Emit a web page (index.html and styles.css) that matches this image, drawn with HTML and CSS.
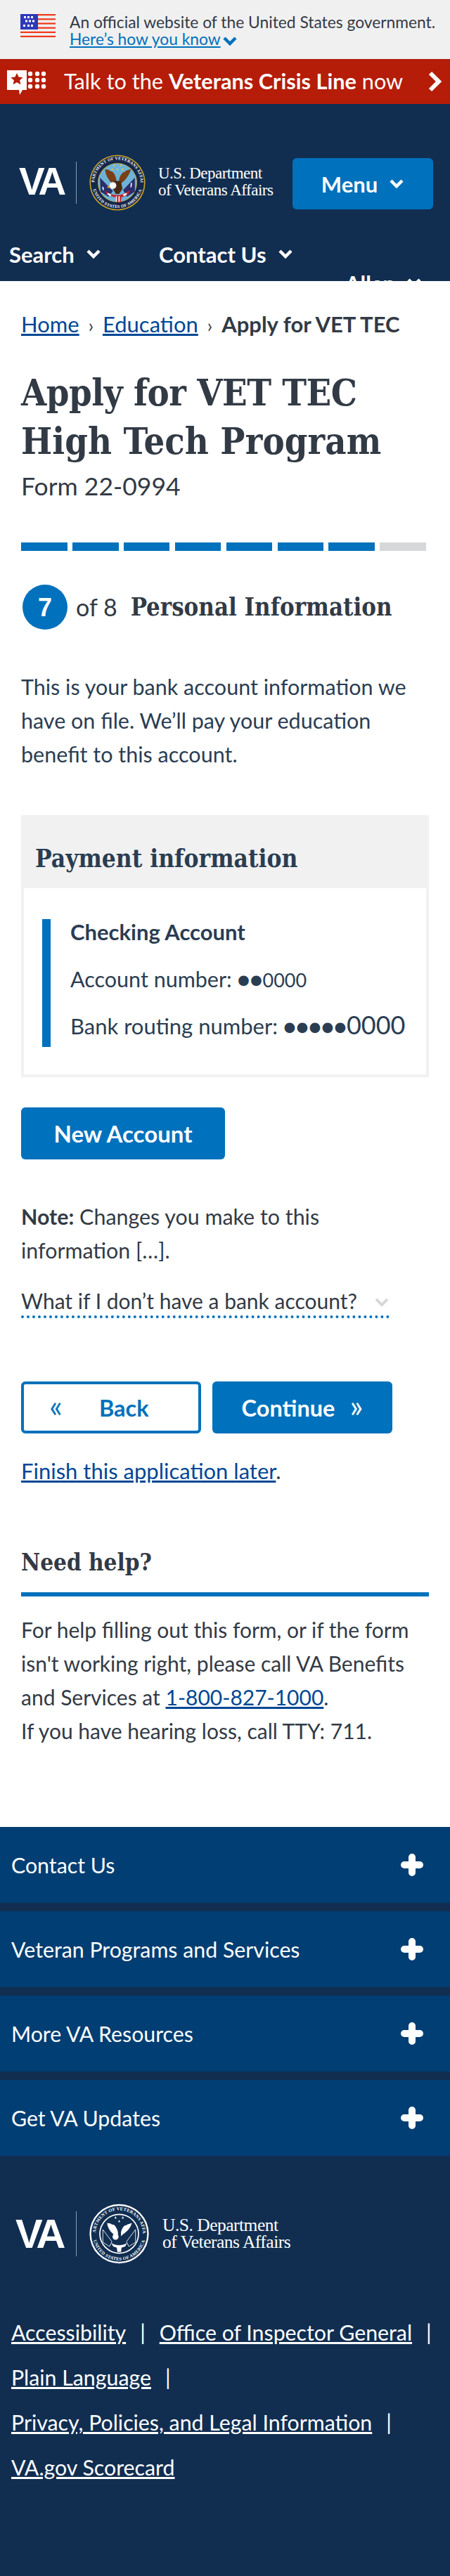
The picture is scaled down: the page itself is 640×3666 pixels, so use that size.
FILE: index.html
```html
<!DOCTYPE html>
<html lang="en">
	<head>
		<meta charset="utf-8">
		<title>Apply for VET TEC High Tech Program</title>
		<link rel="stylesheet" href="styles.css">
	</head>
	<body>
		<div class="govBanner">
			<svg class="flag" viewBox="0 0 50 33">
				<rect y="0" width="50" height="2.2" fill="#f1371a"/>
				<rect y="6.2" width="50" height="2.2" fill="#f1371a"/>
				<rect y="12.4" width="50" height="2.2" fill="#f1371a"/>
				<rect y="18.6" width="50" height="2.2" fill="#f1371a"/>
				<rect y="24.8" width="50" height="2.2" fill="#f1371a"/>
				<rect y="30.8" width="50" height="2.2" fill="#f1371a"/>
				<rect width="25" height="22" fill="#2e39b8"/>
				<path fill="#fff" d="M5 3h3v3H5zM10 3h3v3h-3zM15 3h3v3h-3zM7 8.5h3v3H7zM12 8.5h3v3h-3zM17 8.5h3v3h-3zM4 15h3v3H4zM10 15h3v3h-3zM15 15h3v3h-3z"/>
			</svg>
			<div class="govText">
				An official website of the United States government.<br>
				<a href="#">Here’s how you know</a><svg class="govChevron" viewBox="0 0 22 16"><path d="M3 3l8 8 8-8"/></svg>
			</div>
		</div>

		<a class="crisisBar" href="#">
			<svg class="crisisIcon" viewBox="0 0 56 35">
				<path fill="#fff" d="M0 0h28v28h-6l-4 7-1-7H0z"/>
				<path fill="#b51d08" d="M14 4l2.600 5.600 6 .6-4.500 4 1.300 6L14 17.200 8.600 20.200l1.300-6-4.500-4 6-.6z"/>
				<g fill="#fff">
					<circle cx="33" cy="5" r="3.200"/><circle cx="43" cy="5" r="3.200"/><circle cx="52" cy="5" r="3.200"/>
					<circle cx="33" cy="14" r="3.200"/><circle cx="43" cy="14" r="3.200"/><circle cx="52" cy="14" r="3.200"/>
					<circle cx="33" cy="23" r="3.200"/><circle cx="43" cy="23" r="3.200"/><circle cx="52" cy="23" r="3.200"/>
				</g>
			</svg>
			<span class="crisisText">Talk to the <strong>Veterans Crisis Line</strong> now</span>
			<svg class="crisisArrow" viewBox="0 0 20 30"><path d="M4 3l12 12L4 27"/></svg>
		</a>

		<header class="siteHeader">
			<div class="logoRow">
				<div class="vaLogo">
					<span class="vaMark">VA</span>
					<span class="vaRule"></span>
					<svg class="seal" viewBox="0 0 100 100">
						<defs>
							<path id="sealTop" d="M9 50a41 41 0 0 1 82 0"/>
							<path id="sealBottom" d="M5 50a45 45 0 0 0 90 0"/>
						</defs>
						<circle cx="50" cy="50" r="49.500" fill="#c9a227"/>
						<circle cx="50" cy="50" r="47.500" fill="#14284b"/>
						<circle cx="50" cy="50" r="35" fill="#c9a227"/>
						<circle cx="50" cy="50" r="34" fill="#6db3d8"/>
						<text class="sealText"><textPath href="#sealTop" startOffset="50%" text-anchor="middle">DEPARTMENT OF VETERANS AFFAIRS</textPath></text>
						<text class="sealText"><textPath href="#sealBottom" startOffset="50%" text-anchor="middle">UNITED STATES OF AMERICA</textPath></text>
						<path fill="#f2c733" d="M44 17l1.800 3.600-3.600 0zM56 17l1.800 3.600-3.600 0zM50 24l1.800 3.600-3.600 0zM41 24l1.800 3.600-3.600 0zM59 24l1.800 3.600-3.600 0z"/>
						<path fill="#2b2f6b" d="M19 41l23 24-8 10-14-9zM81 41L60 63l7 12 14-9z"/>
						<path fill="#fff" d="M23 58l2-1 1 6-2 0zM74 50l2 1-1 7-2 0z"/>
						<path fill="#7b3f15" d="M48 56C40 52 29 42 28 26c4 1 7 0 10 4 3-2 8 5 10 14zM53 54c6-5 17-12 21-28-5 2-8 1-11 5-3-1-9 6-10 14z"/>
						<path fill="#4a2a12" d="M44 47h12l3 14-6 9h-6l-5-9z"/>
						<circle cx="42" cy="55" r="6" fill="#fff"/>
						<path fill="#e2a52a" d="M36 55l-5 3 6 2z"/>
						<path fill="#c4262e" d="M28 64c6 5 14 8 22 8 9 0 15-4 22-9l-2 7c-5 4-9 5-13 6l-1 9-9 0-1-9c-6-1-12-4-16-7z"/>
						<path fill="#fff" d="M33 68l6 3-1 3-6-3zM60 71l6-3 1 3-6 3zM47 74h2v10h-2zM52 74h2v10h-2z"/>
					</svg>
					<div class="vaName">U.S. Department<br>of Veterans Affairs</div>
				</div>
				<button class="menuButton">Menu<svg class="chevron" viewBox="0 0 22 16"><path d="M3 3l8 8 8-8"/></svg></button>
			</div>
			<nav class="navRow">
				<a class="navItem navSearch" href="#">Search<svg class="chevron" viewBox="0 0 22 16"><path d="M3 3l8 8 8-8"/></svg></a>
				<a class="navItem" href="#">Contact Us<svg class="chevron" viewBox="0 0 22 16"><path d="M3 3l8 8 8-8"/></svg></a>
				<div class="navUser"><a class="navItem" href="#">Allen<svg class="chevron" viewBox="0 0 22 16"><path d="M3 3l8 8 8-8"/></svg></a></div>
			</nav>
		</header>

		<main class="content">
			<div class="breadcrumbs">
				<a href="#">Home</a><span class="crumbSep">›</span><a href="#">Education</a><span class="crumbSep">›</span><strong>Apply for VET TEC</strong>
			</div>

			<h1>Apply for VET TEC<br><span class="titleSecond">High Tech Program</span></h1>
			<div class="formNumber">Form 22-0994</div>

			<div class="segments">
				<div class="segment done"></div>
				<div class="segment done"></div>
				<div class="segment done"></div>
				<div class="segment done"></div>
				<div class="segment done"></div>
				<div class="segment done"></div>
				<div class="segment done"></div>
				<div class="segment"></div>
			</div>

			<div class="stepRow">
				<span class="stepNumber">7</span>
				<span class="stepOf">of 8</span>
				<h2 class="stepName">Personal Information</h2>
			</div>

			<p class="intro">This is your bank account information we have on file. We’ll pay your education benefit to this account.</p>

			<section class="paymentBox">
				<h3 class="paymentHead">Payment information</h3>
				<div class="paymentBody">
					<div class="accountCard">
						<div class="accountRow accountType">Checking Account</div>
						<div class="accountRow accountGap">Account number: <span class="masked">●●</span><span class="smallDigits">0000</span></div>
						<div class="accountRow accountGap routingRow">Bank routing number: <span class="masked">●●●●●</span><span class="bigDigits">0000</span></div>
					</div>
				</div>
			</section>

			<button class="primaryButton newAccount">New Account</button>

			<p class="note"><strong>Note:</strong> Changes you make to this<br>information […].</p>

			<div class="expander">
				<span>What if I don’t have a bank account?</span>
				<svg class="expanderChevron" viewBox="0 0 22 16"><path d="M3 3l8 8 8-8"/></svg>
			</div>

			<div class="formButtons">
				<button class="navButton backButton"><span class="quote">«</span><span class="backLabel">Back</span></button>
				<button class="navButton continueButton"><span>Continue</span><span class="quote">»</span></button>
			</div>

			<p class="finishLater"><a href="#">Finish this application later</a>.</p>

			<h3 class="helpHead">Need help?</h3>
			<p class="helpText">For help filling out this form, or if the form isn't working right, please call VA Benefits and Services at <a href="#">1-800-827-1000</a>.<br>If you have hearing loss, call TTY: 711.</p>
		</main>

		<footer class="siteFooter">
			<div class="accordions">
				<div class="accordion"><span>Contact Us</span><svg class="plus" viewBox="0 0 32 32"><path d="M16 5v22M5 16h22"/></svg></div>
				<div class="accordion"><span>Veteran Programs and Services</span><svg class="plus" viewBox="0 0 32 32"><path d="M16 5v22M5 16h22"/></svg></div>
				<div class="accordion"><span>More VA Resources</span><svg class="plus" viewBox="0 0 32 32"><path d="M16 5v22M5 16h22"/></svg></div>
				<div class="accordion"><span>Get VA Updates</span><svg class="plus" viewBox="0 0 32 32"><path d="M16 5v22M5 16h22"/></svg></div>
			</div>

			<div class="footerLogo">
				<span class="vaMark">VA</span>
				<span class="vaRule"></span>
				<svg class="seal footerSeal" viewBox="0 0 100 100">
					<defs>
						<path id="footTop" d="M11 50a39 39 0 0 1 78 0"/>
						<path id="footBottom" d="M6 50a44 44 0 0 0 88 0"/>
					</defs>
					<circle cx="50" cy="50" r="49" fill="#fff"/>
					<circle cx="50" cy="50" r="46.500" fill="#112e51" stroke="#fff" stroke-width="1" stroke-dasharray="1.500 1.500"/>
					<circle cx="50" cy="50" r="33" fill="#fff"/>
					<circle cx="50" cy="50" r="31" fill="#112e51"/>
					<text class="sealText"><textPath href="#footTop" startOffset="50%" text-anchor="middle">DEPARTMENT OF VETERANS AFFAIRS</textPath></text>
					<text class="sealText"><textPath href="#footBottom" startOffset="50%" text-anchor="middle">UNITED STATES OF AMERICA</textPath></text>
					<path fill="#fff" d="M44 21l1.800 3.600-3.600 0zM56 21l1.800 3.600-3.600 0zM50 27l1.800 3.600-3.600 0z"/>
					<path fill="#fff" d="M48 56C41 52 31 44 30 32c3 1 6 0 8 3 3-2 8 4 10 12zM53 54c5-5 15-10 18-22-4 2-6 1-9 4-3-1-8 5-9 12z"/>
					<path fill="none" stroke="#fff" stroke-width="1" d="M23 43l15 20-4 8-11-7zM77 43L62 63l4 8 11-7z"/>
					<circle cx="44" cy="55" r="5" fill="#fff"/>
					<path fill="#fff" d="M37 65c8 5 18 5 26 0l-3 6-6 2-1 7h-6l-1-7-6-2z"/>
				</svg>
				<div class="vaName">U.S. Department<br>of Veterans Affairs</div>
			</div>

			<ul class="footerLinks">
				<li><a href="#">Accessibility</a></li>
				<li><a href="#">Office of Inspector General</a></li>
				<li><a href="#">Plain Language</a></li>
				<li><a href="#">Privacy, Policies, and Legal Information</a></li>
				<li class="lastLink"><a href="#">VA.gov Scorecard</a></li>
			</ul>
		</footer>
	</body>
</html>
```

FILE: styles.css
```css
*{
	box-sizing: border-box;
}
body{
	margin: 0;
	font-family: "Lato", "Noto Sans", sans-serif;
	font-size: 30px;
	line-height: 48px;
	color: #323a45;
	background-color: #fff;
}
a{
	color: #004795;
}
p, h1, h2, h3, ul{
	margin: 0;
	padding: 0;
}
button{
	font-family: inherit;
	border: none;
	cursor: pointer;
}
h1, h2, h3{
	font-family: "DejaVu Serif Condensed", "DejaVu Serif", serif;
	font-weight: bold;
}

/* top banner */
.govBanner{
	display: flex;
	height: 84px;
	padding: 20px 0 0 29px;
	background-color: #f0f0f0;
}
.flag{
	width: 50px;
	height: 33px;
	flex: none;
}
.govText{
	margin-left: 20px;
	margin-top: -1px;
	font-size: 22.8px;
	line-height: 24px;
	white-space: nowrap;
}
.govText a{
	color: #0071bc;
}
.govChevron{
	width: 22px;
	height: 16px;
	margin-left: 2px;
	vertical-align: -3px;
}
.govChevron path{
	fill: none;
	stroke: #0071bc;
	stroke-width: 4.500;
}

/* crisis line */
.crisisBar{
	display: flex;
	align-items: center;
	height: 64px;
	padding: 0 12px 0 10px;
	color: #fff;
	background-color: #b51d08;
	text-decoration: none;
}
.crisisIcon{
	width: 56px;
	height: 35px;
	margin-top: 3px;
	flex: none;
}
.crisisText{
	margin-left: 25px;
	font-size: 30.7px;
	line-height: 40px;
	white-space: nowrap;
}
.crisisArrow{
	width: 20px;
	height: 30px;
	margin-left: auto;
}
.crisisArrow path{
	fill: none;
	stroke: #fff;
	stroke-width: 6;
}

/* header */
.siteHeader{
	height: 252px;
	overflow: hidden;
	padding-top: 72px;
	background-color: #112e51;
}
.logoRow{
	display: flex;
	justify-content: space-between;
	align-items: flex-start;
	padding: 0 24px 0 27px;
}
.vaLogo, .footerLogo{
	display: flex;
	align-items: center;
	color: #fff;
}
.vaMark{
	width: 66px;
	margin-bottom: 4px;
	font-family: "Liberation Sans", sans-serif;
	font-size: 55px;
	font-weight: bold;
	line-height: 56px;
	letter-spacing: -5px;
}
.vaRule{
	width: 1px;
	height: 60px;
	margin: 0 18px 0 15px;
	background-color: #8b9ab0;
}
.seal{
	width: 80px;
	height: 80px;
	flex: none;
}
.sealText{
	font-family: "Liberation Serif", serif;
	font-size: 7.500px;
	font-weight: bold;
	letter-spacing: .3px;
	fill: #fff;
}
.vaName{
	margin: 0 0 3px 18px;
	font-family: "Liberation Serif", serif;
	font-size: 23px;
	line-height: 24px;
	letter-spacing: -.5px;
	white-space: nowrap;
}
.menuButton{
	display: flex;
	justify-content: center;
	align-items: center;
	width: 200px;
	height: 73px;
	margin-top: 5px;
	border-radius: 6px;
	color: #fff;
	background-color: #0071bc;
	font-size: 31px;
	font-weight: bold;
}
.chevron{
	width: 22px;
	height: 16px;
	margin-left: 16px;
}
.chevron path{
	fill: none;
	stroke: #fff;
	stroke-width: 4.500;
}
.navRow{
	display: flex;
	flex-wrap: wrap;
	padding: 38px 40px 0 13px;
}
.navItem{
	display: inline-flex;
	align-items: center;
	color: #fff;
	font-size: 31px;
	font-weight: bold;
	line-height: 48px;
	text-decoration: none;
}
.navSearch{
	width: 213px;
}
.navUser{
	display: flex;
	justify-content: flex-end;
	flex-basis: 100%;
	margin-top: -7px;
}

/* main column */
.content{
	padding: 38px 30px 113px;
}
.breadcrumbs{
	font-size: 31px;
	line-height: 46px;
	white-space: nowrap;
}
.crumbSep{
	margin: 0 13px;
	font-size: 26px;
	line-height: 20px;
}
h1{
	margin-top: 40px;
	font-size: 52px;
	line-height: 69px;
	letter-spacing: -.5px;
	white-space: nowrap;
}
.titleSecond{
	letter-spacing: .1px;
}
.formNumber{
	margin-top: 7px;
	font-size: 35.5px;
	line-height: 46px;
}
.segments{
	display: grid;
	grid-template-columns: repeat(8, 1fr);
	column-gap: 7.300px;
	width: 576px;
	height: 12px;
	margin-top: 57px;
}
.segment{
	background-color: #d6d7d9;
}
.done{
	background-color: #0071bc;
}
.stepRow{
	display: flex;
	align-items: center;
	height: 64px;
	margin: 48px 0 0 2px;
}
.stepNumber{
	width: 64px;
	height: 64px;
	border-radius: 50%;
	color: #fff;
	background-color: #0071bc;
	font-family: "Liberation Sans", sans-serif;
	font-size: 36px;
	font-weight: bold;
	line-height: 66px;
	text-align: center;
}
.stepOf{
	margin-left: 12px;
	font-size: 34px;
}
.stepName{
	margin-left: 19px;
	font-size: 34.500px;
	white-space: nowrap;
}
.intro{
	margin-top: 57px;
	font-size: 30.5px;
	color: #2a3d52;
}
.paymentBox{
	margin-top: 63px;
	border: 4px solid #f1f1f1;
	color: #2a3d52;
}
.paymentHead{
	height: 100px;
	padding: 34px 0 0 16px;
	background-color: #f1f1f1;
	font-size: 35px;
	line-height: 48px;
	white-space: nowrap;
}
.paymentBody{
	padding: 44px 26px 39px;
}
.accountCard{
	height: 182px;
	padding-left: 28px;
	border-left: 12px solid #0071bc;
}
.accountRow{
	line-height: 36px;
	white-space: nowrap;
}
.accountType{
	font-size: 31px;
	font-weight: bold;
}
.accountGap{
	margin-top: 31px;
	font-size: 30.5px;
}
.routingRow{
	font-size: 31px;
}
.masked{
	font-size: 30px;
	line-height: 20px;
}
.smallDigits{
	font-size: 27px;
	line-height: 20px;
}
.bigDigits{
	font-size: 36px;
	line-height: 20px;
}
.primaryButton{
	display: block;
	width: 290px;
	height: 74px;
	border-radius: 6px;
	color: #fff;
	background-color: #0071bc;
	font-size: 33px;
	font-weight: bold;
}
.newAccount{
	margin-top: 43px;
}
.note{
	margin-top: 57px;
	font-size: 30.4px;
}
.expander{
	display: flex;
	justify-content: space-between;
	width: 524px;
	height: 49px;
	margin-top: 24px;
	border-bottom: 4px dotted #0071bc;
	white-space: nowrap;
}
.expanderChevron{
	width: 22px;
	height: 16px;
	margin-top: 19px;
}
.expanderChevron path{
	fill: none;
	stroke: #d6d7d9;
	stroke-width: 4;
}
.formButtons{
	display: flex;
	column-gap: 16px;
	margin-top: 90px;
}
.navButton{
	display: flex;
	align-items: center;
	width: 256px;
	height: 74px;
	border-radius: 6px;
	font-size: 32.5px;
	font-weight: bold;
}
.backButton{
	padding-left: 36px;
	border: 4px solid #0071bc;
	color: #0071bc;
	background-color: #fff;
}
.backLabel{
	margin-left: 52px;
}
.continueButton{
	justify-content: center;
	column-gap: 21px;
	color: #fff;
	background-color: #0071bc;
}
.quote{
	font-weight: normal;
	font-size: 44px;
	line-height: 1;
	margin-top: -6px;
}
.finishLater{
	margin-top: 29px;
	font-size: 31px;
}
.helpHead{
	margin-top: 83px;
	padding-bottom: 18px;
	border-bottom: 6px solid #0071bc;
	font-size: 33px;
	line-height: 48px;
}
.helpText{
	margin-top: 23px;
}

/* footer */
.siteFooter{
	height: 1066px;
	background-color: #112e51;
	color: #fff;
}
.accordions{
	display: flex;
	flex-direction: column;
	row-gap: 12px;
}
.accordion{
	display: flex;
	justify-content: space-between;
	align-items: center;
	height: 108px;
	padding: 0 38px 0 16px;
	background-color: #003e73;
	font-size: 30.3px;
}
.plus{
	width: 32px;
	height: 32px;
}
.plus path{
	fill: none;
	stroke: #fff;
	stroke-width: 10;
	stroke-linecap: round;
}
.footerLogo{
	margin-top: 68px;
	padding-left: 22px;
}
.footerLogo .vaMark{
	width: 70px;
	margin-bottom: 0;
	font-size: 58px;
}
.footerLogo .vaRule{
	height: 64px;
	margin: 0 17px 0 16px;
}
.footerSeal{
	width: 87px;
	height: 86px;
}
.footerLogo .vaName{
	margin: 0 0 0 18px;
	font-size: 25.5px;
}
.footerLinks{
	display: flex;
	flex-wrap: wrap;
	margin-top: 65px;
	padding-left: 16px;
	list-style: none;
	font-size: 30.3px;
	line-height: 64px;
}
.footerLinks a{
	color: #fff;
}
.footerLinks li{
	white-space: nowrap;
}
.footerLinks li::after{
	content: "|";
	margin: 0 20px;
	font-weight: normal;
}
.footerLinks .lastLink::after{
	content: none;
}
```
